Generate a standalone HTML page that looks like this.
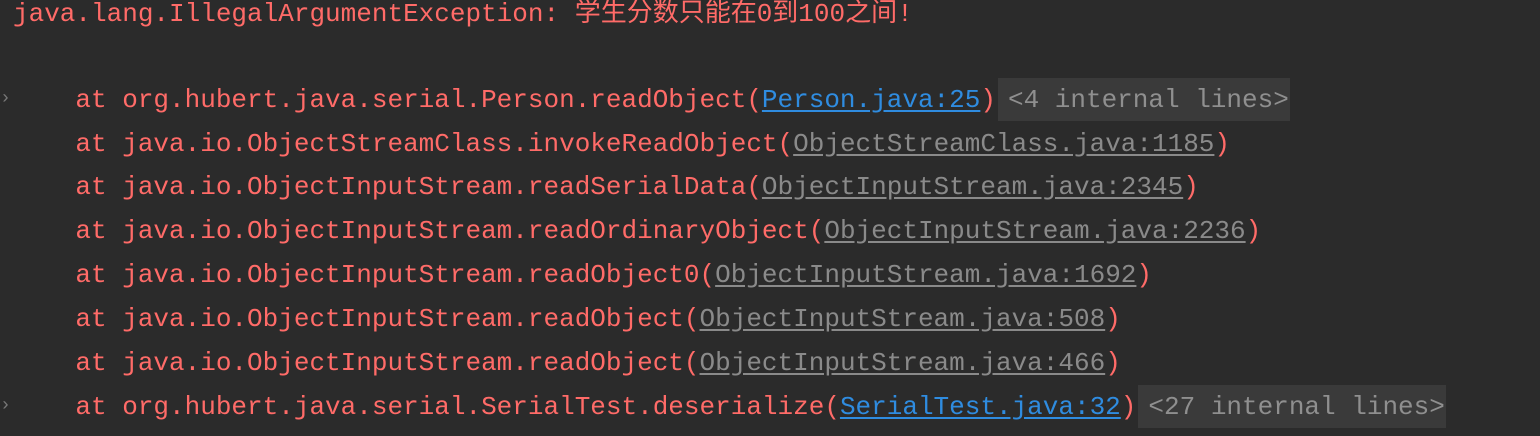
<!DOCTYPE html>
<html><head><meta charset="utf-8"><style>
html,body{margin:0;padding:0;}
body{width:1540px;height:436px;background:#2b2b2b;overflow:hidden;position:relative;
font-family:"Liberation Mono","Noto Sans CJK SC",monospace;font-size:26px;color:#ff6b68;}
.l{position:absolute;left:13px;white-space:pre;height:44px;line-height:44px;}
.b{color:#2f8ce0;text-decoration:underline;text-underline-offset:3px;}
.g{color:#8a8a8a;text-decoration:underline;text-underline-offset:3px;}
.box{background:#3a3a3a;color:#8f8f8f;padding:0 1px 0 10px;margin-left:2px;display:inline-block;height:43px;}
.ar{position:absolute;left:0;color:#777;font-size:18px;line-height:18px;}
</style></head><body>
<div class="l" style="top:-8px">java.lang.IllegalArgumentException: 学生分数只能在0到100之间!</div>
<div class="ar" style="top:90px">›</div>
<div class="l" style="top:78px">    at org.hubert.java.serial.Person.readObject(<span class="b">Person.java:25</span>)<span class="box">&lt;4 internal lines&gt;</span></div>
<div class="l" style="top:122px">    at java.io.ObjectStreamClass.invokeReadObject(<span class="g">ObjectStreamClass.java:1185</span>)</div>
<div class="l" style="top:165px">    at java.io.ObjectInputStream.readSerialData(<span class="g">ObjectInputStream.java:2345</span>)</div>
<div class="l" style="top:209px">    at java.io.ObjectInputStream.readOrdinaryObject(<span class="g">ObjectInputStream.java:2236</span>)</div>
<div class="l" style="top:253px">    at java.io.ObjectInputStream.readObject0(<span class="g">ObjectInputStream.java:1692</span>)</div>
<div class="l" style="top:297px">    at java.io.ObjectInputStream.readObject(<span class="g">ObjectInputStream.java:508</span>)</div>
<div class="l" style="top:341px">    at java.io.ObjectInputStream.readObject(<span class="g">ObjectInputStream.java:466</span>)</div>
<div class="ar" style="top:397px">›</div>
<div class="l" style="top:385px">    at org.hubert.java.serial.SerialTest.deserialize(<span class="b">SerialTest.java:32</span>)<span class="box">&lt;27 internal lines&gt;</span></div>
</body></html>
